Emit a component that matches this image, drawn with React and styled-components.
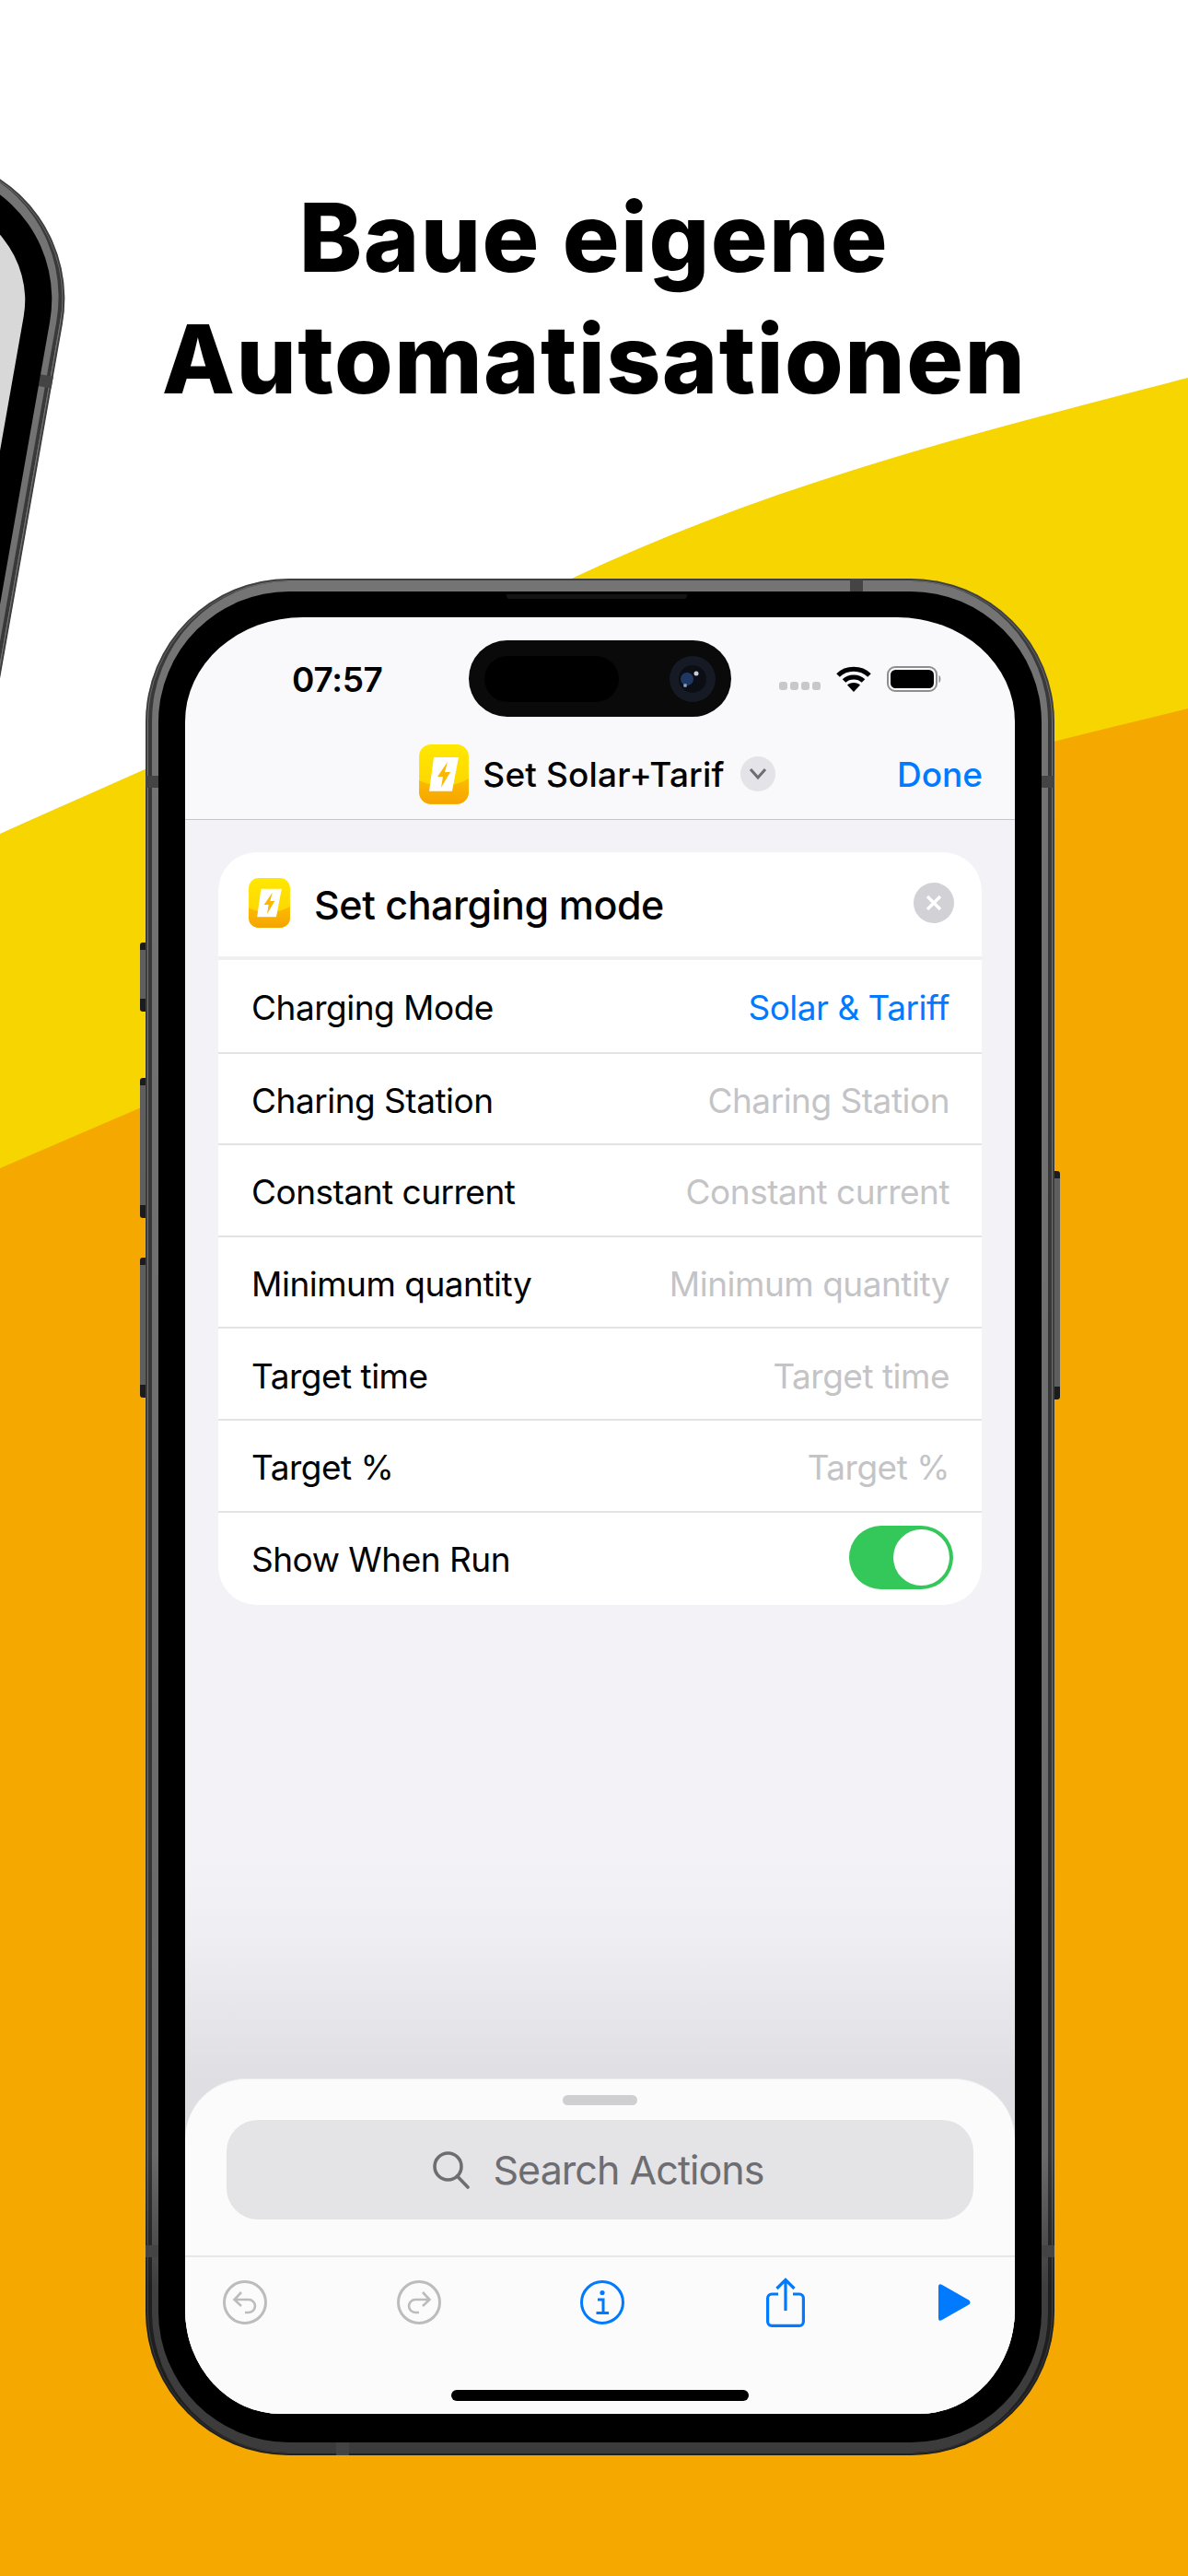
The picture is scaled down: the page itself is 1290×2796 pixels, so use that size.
import styled, { createGlobalStyle } from "styled-components";

const GlobalStyle = createGlobalStyle`
  html, body {
    margin: 0;
    padding: 0;
    background: white;
  }
  * {
    box-sizing: border-box;
  }
`;

const uiFont = `Inter, "Liberation Sans", sans-serif`;
const blue = "#007aff";

const Page = styled.div`
  position: relative;
  width: 1290px;
  height: 2796px;
  overflow: hidden;
  background: white;
  font-family: ${uiFont};
`;

const Backdrop = styled.svg`
  position: absolute;
  top: 0;
  left: 0;
`;

const Headline = styled.h1`
  position: relative;
  margin: 0;
  padding-top: 192px;
  font-family: ${uiFont};
  font-size: 103px;
  font-weight: 800;
  line-height: 132px;
  letter-spacing: 1.4px;
  text-align: center;
  color: black;
`;

const Handset = styled.div`
  position: relative;
  width: 987px;
  height: 2037px;
  padding: 14px;
  border-radius: 156px;
  background: linear-gradient(#747474, #6a6a6a 84%, #3f3f3f 91%, #3b3b3b);
  box-shadow: inset 0 0 0 2px rgba(0, 0, 0, 0.45);

  &::before {
    content: "";
    position: absolute;
    top: 3px;
    right: 3px;
    bottom: 3px;
    left: 3px;
    border-left: 4px solid rgba(0, 0, 0, 0.5);
    border-right: 4px solid rgba(0, 0, 0, 0.5);
    border-radius: 152px;
  }
`;

const MainPhone = styled(Handset)`
  margin: 172px 0 0 158px;
`;

const SidePhone = styled(Handset)`
  position: absolute;
  top: 198px;
  left: -892px;
  transform: rotate(10deg);
  transform-origin: top right;
`;

const SideButton = styled.div`
  position: absolute;
  top: ${(p) => p.$top}px;
  ${(p) => (p.$right ? "right: -6px;" : "left: -6px;")}
  width: 6px;
  height: ${(p) => p.$height}px;
  background: linear-gradient(#1c1c1c 8px, #5e5e5e 8px, #5e5e5e calc(100% - 14px), #1c1c1c calc(100% - 14px));
  border-radius: ${(p) => (p.$right ? "0 3px 3px 0" : "3px 0 0 3px")};
`;

/* antenna cuts on the steel ring */
const RingCut = styled.div`
  position: absolute;
  background: #444;
  ${(p) =>
    p.$horizontal
      ? `left: ${p.$at}px; ${p.$bottom ? "bottom: 0;" : "top: 0;"} width: 14px; height: 14px;`
      : `top: ${p.$at}px; ${p.$right ? "right: 0;" : "left: 0;"} width: 14px; height: 13px;`}
`;

const Bezel = styled.div`
  position: relative;
  width: 100%;
  height: 100%;
  padding: 28px 29px 31px;
  border-radius: 142px;
  background: black;
`;

const Speaker = styled.div`
  position: absolute;
  top: 3px;
  left: 378px;
  width: 196px;
  height: 5px;
  border-radius: 0 0 4px 4px;
  background: #141414;
`;

const Screen = styled.div`
  position: relative;
  display: flex;
  flex-direction: column;
  width: 100%;
  height: 100%;
  overflow: hidden;
  border-radius: 128px 128px 104px 104px / 113px;
  background: ${(p) => p.$bg || "#f9f9fb"};
`;

const StatusBar = styled.div`
  display: flex;
  align-items: center;
  justify-content: space-between;
  height: 134px;
  padding: 0 79px 0 116px;
`;

const Time = styled.span`
  font-size: 37px;
  font-weight: 600;
  letter-spacing: -0.3px;
  color: black;
`;

const Island = styled.div`
  position: absolute;
  top: 25px;
  left: 308px;
  display: flex;
  align-items: center;
  justify-content: space-between;
  width: 285px;
  height: 83px;
  padding: 0 17px;
  border-radius: 42px;
  background: #0a0a0a;
`;

const IslandPill = styled.div`
  width: 146px;
  height: 50px;
  border-radius: 25px;
  background: black;
`;

const StatusIcons = styled.div`
  display: flex;
  align-items: center;
  gap: 17px;
`;

const Dots = styled.div`
  display: flex;
  gap: 3px;
  margin-top: 14px;
`;

const Dot = styled.span`
  width: 9px;
  height: 9px;
  border-radius: 3px;
  background: #c8c8ca;
`;

const NavBar = styled.div`
  display: grid;
  grid-template-columns: 1fr auto 1fr;
  align-items: center;
  height: 86px;
  padding: 0 35px 12px 29px;
  border-bottom: 1px solid #c6c6c8;
`;

const NavTitle = styled.div`
  display: flex;
  align-items: center;
  grid-column: 2;
`;

const NavTitleText = styled.span`
  margin: 0 17px 0 15px;
  font-size: 37px;
  font-weight: 500;
  letter-spacing: 0.15px;
  color: black;
`;

const ChevronBadge = styled.span`
  display: flex;
  align-items: center;
  justify-content: center;
  width: 38px;
  height: 38px;
  border-radius: 50%;
  background: #e3e3e8;
`;

const DoneButton = styled.span`
  justify-self: end;
  font-size: 37px;
  font-weight: 500;
  letter-spacing: 0;
  color: ${blue};
`;

const Content = styled.div`
  display: flex;
  flex: 1;
  flex-direction: column;
  background: linear-gradient(#f2f2f7 0, #f2f2f7 1130px, #eeeef2 1220px, #e6e6ea 1300px, #dfdfe3 1366px);
`;

const Card = styled.div`
  margin: 35px 36px 0;
  padding-bottom: 3px;
  overflow: hidden;
  border-radius: 42px;
  background: white;
`;

const CardHeader = styled.div`
  display: flex;
  align-items: center;
  height: 117px;
  padding: 0 30px 4px 33px;
  border-bottom: 4px solid #efeff1;
`;

const CardTitle = styled.span`
  flex: 1;
  margin: 5px 0 0 26px;
  font-size: 43px;
  font-weight: 500;
  letter-spacing: -0.45px;
  color: black;
`;

const CloseBadge = styled.span`
  display: flex;
  align-items: center;
  justify-content: center;
  width: 44px;
  height: 44px;
  border-radius: 50%;
  background: #d1d1d6;
`;

const Row = styled.div`
  display: flex;
  align-items: center;
  justify-content: space-between;
  height: 99.6px;
  padding: 4px 35px 0 36px;
  font-size: 37px;
  letter-spacing: -0.5px;
  & + & {
    border-top: 2px solid #e3e3e5;
  }
`;

const RowLabel = styled.span`
  color: black;
`;

const RowValue = styled.span`
  color: ${(p) => (p.$filled ? blue : "#c4c4c7")};
`;

const Toggle = styled.div`
  display: flex;
  justify-content: flex-end;
  align-items: center;
  width: 113px;
  height: 69px;
  margin: -4px -4px 0 0;
  padding: 0 4px;
  border-radius: 35px;
  background: #34c759;
`;

const ToggleKnob = styled.span`
  width: 61px;
  height: 61px;
  border-radius: 50%;
  background: white;
`;

const Sheet = styled.div`
  display: flex;
  flex-direction: column;
  margin-top: auto;
  height: 364px;
  border-radius: 66px 66px 0 0;
  border-top: 1px solid #ececee;
  background: #fbfbfb;
`;

const Handle = styled.div`
  width: 81px;
  height: 11px;
  margin: 17px auto 16px;
  border-radius: 6px;
  background: #cfcfd1;
`;

const SearchField = styled.div`
  display: flex;
  align-items: center;
  justify-content: center;
  gap: 24px;
  height: 108px;
  margin: 0 45px;
  padding-right: 4px;
  border-radius: 34px;
  background: #e4e4e6;
`;

const SearchText = styled.span`
  font-size: 43px;
  letter-spacing: -0.95px;
  color: #6d6d72;
`;

const Toolbar = styled.div`
  display: flex;
  align-items: center;
  height: 99px;
  margin-top: 39px;
  border-top: 2px solid #e8e8ea;
`;

const ToolButton = styled.span`
  display: flex;
  margin-left: ${(p) => p.$gap}px;
  color: ${(p) => (p.$muted ? "#bcbcbe" : blue)};
`;

const HomeBar = styled.div`
  width: 323px;
  height: 12px;
  margin: 47px auto 0;
  border-radius: 6px;
  background: black;
`;

const AppIcon = ({ size }) => (
  <svg width={size} height={size * 1.2} viewBox="0 0 54 65" style={{ flexShrink: 0 }}>
    <defs>
      <linearGradient id="appTop" x1="0" y1="0" x2="0" y2="1">
        <stop offset="0" stopColor="#ffe800" />
        <stop offset="1" stopColor="#fbcf00" />
      </linearGradient>
      <linearGradient id="appBottom" x1="0" y1="0" x2="0" y2="1">
        <stop offset="0" stopColor="#fcbc00" />
        <stop offset="1" stopColor="#f6a400" />
      </linearGradient>
    </defs>
    <rect width="54" height="65" rx="13" fill="url(#appTop)" />
    <path d="M0 39 C16 47 38 47 54 37 V52 A13 13 0 0 1 41 65 H13 A13 13 0 0 1 0 52Z" fill="url(#appBottom)" />
    <path d="M16 14 H43 L36 51 H11Z" fill="white" />
    <path d="M31 19 L20 35 H26 L24 47 L34 30 H28Z" fill="#fbb800" />
  </svg>
);

const WifiIcon = () => (
  <svg width="38" height="28" viewBox="0 0 38 28">
    <path d="M2 10 C11 1 27 1 36 10" fill="none" stroke="black" strokeWidth="5" />
    <path d="M8.5 16 C14 10.5 24 10.5 29.5 16" fill="none" stroke="black" strokeWidth="5" />
    <path d="M19 28 L12 20.5 C15 17 23 17 26 20.5Z" fill="black" />
  </svg>
);

const BatteryIcon = () => (
  <svg width="60" height="28" viewBox="0 0 60 28">
    <rect x="1" y="1" width="53" height="26" rx="8" fill="none" stroke="#8e8e90" strokeWidth="2" />
    <rect x="4" y="4" width="47" height="20" rx="5.5" fill="black" />
    <path d="M56.5 10 C59 11 59 17 56.5 18Z" fill="#8e8e90" />
  </svg>
);

const CameraLens = () => (
  <svg width="50" height="50" viewBox="0 0 50 50">
    <circle cx="25" cy="25" r="25" fill="#161a24" />
    <circle cx="25" cy="25" r="15" fill="#0c0e16" />
    <circle cx="19" cy="25" r="7" fill="#1f3763" />
    <circle cx="29" cy="19" r="2.5" fill="#c9ccd6" />
    <circle cx="17" cy="32" r="2" fill="#7f9cc4" />
  </svg>
);

const SearchIcon = () => (
  <svg width="42" height="42" viewBox="0 0 42 42" fill="none" stroke="#6d6d72" strokeWidth="3.6" strokeLinecap="round">
    <circle cx="17.5" cy="17.5" r="14.5" />
    <path d="M27.5 28 L39 40" />
  </svg>
);

const UndoIcon = () => (
  <svg width="48" height="48" viewBox="0 0 48 48" fill="none" stroke="currentColor" strokeWidth="3">
    <circle cx="24" cy="24" r="22.5" />
    <path d="M20 13 L12.5 21 L20 28 M12.5 21 H28 A7 7 0 0 1 28 35 H24" strokeWidth="2.6" />
  </svg>
);

const RedoIcon = () => (
  <svg width="48" height="48" viewBox="0 0 48 48" fill="none" stroke="currentColor" strokeWidth="3">
    <circle cx="24" cy="24" r="22.5" />
    <path d="M28 13 L35.5 21 L28 28 M35.5 21 H20 A7 7 0 0 0 20 35 H24" strokeWidth="2.6" />
  </svg>
);

const InfoIcon = () => (
  <svg width="48" height="48" viewBox="0 0 48 48" fill="none" stroke="currentColor" strokeWidth="3">
    <circle cx="24" cy="24" r="22.5" />
    <circle cx="24" cy="13.5" r="2.6" fill="currentColor" stroke="none" />
    <path d="M19 21 H25 V35 M17.5 35.5 H31" strokeWidth="3" />
  </svg>
);

const ShareIcon = () => (
  <svg width="42" height="54" viewBox="0 0 42 54" fill="none" stroke="currentColor" strokeWidth="3.2">
    <path d="M13 18 H6 A4.5 4.5 0 0 0 1.6 22.5 V48 A4.5 4.5 0 0 0 6 52.4 H36 A4.5 4.5 0 0 0 40.4 48 V22.5 A4.5 4.5 0 0 0 36 18 H29" />
    <path d="M21 36 V2.5 M11.5 12 L21 2.5 L30.5 12" />
  </svg>
);

const PlayIcon = () => (
  <svg width="35" height="40" viewBox="0 0 35 40" fill="currentColor">
    <path d="M0 3 C0 0 2 -0.5 4 1 L33 17.5 C35 19 35 21 33 22.5 L4 39 C2 40.5 0 40 0 37Z" />
  </svg>
);

const ChevronIcon = () => (
  <svg width="20" height="14" viewBox="0 0 20 14" fill="none" stroke="#6d6d72" strokeWidth="3">
    <path d="M2 2 L10 11 L18 2" />
  </svg>
);

const CloseIcon = () => (
  <svg width="20" height="20" viewBox="0 0 20 20" fill="none" stroke="white" strokeWidth="3.4">
    <path d="M3 3 L17 17 M17 3 L3 17" />
  </svg>
);

const fields = [
  { label: "Charging Mode", value: "Solar & Tariff", filled: true },
  { label: "Charing Station", value: "Charing Station" },
  { label: "Constant current", value: "Constant current" },
  { label: "Minimum quantity", value: "Minimum quantity" },
  { label: "Target time", value: "Target time" },
  { label: "Target %", value: "Target %" },
];

export default function App() {
  return (
    <Page>
      <GlobalStyle />
      <Backdrop width="1290" height="2796" viewBox="0 0 1290 2796">
        <path d="M0 905 C200 815 420 722 625 626 C850 520 1080 465 1290 410 V2796 H0Z" fill="#f6d500" />
        <path d="M0 1268 L158 1200 C500 1000 900 860 1148 804 C1195 792 1245 780 1290 769 V2796 H0Z" fill="#f5a800" />
      </Backdrop>

      <SidePhone>
        <RingCut $at={214} $right />
        <Bezel>
          <Screen $bg="#d8d8d8" />
        </Bezel>
      </SidePhone>

      <Headline>
        Baue eigene
        <br />
        Automatisationen
      </Headline>

      <MainPhone>
        <SideButton $top={395} $height={75} />
        <SideButton $top={542} $height={152} />
        <SideButton $top={737} $height={152} />
        <SideButton $right $top={643} $height={248} />
        <RingCut $at={214} />
        <RingCut $at={214} $right />
        <RingCut $at={1809} />
        <RingCut $at={1809} $right />
        <RingCut $horizontal $at={765} />
        <RingCut $horizontal $bottom $at={207} />
        <Bezel>
          <Speaker />
          <Screen>
            <StatusBar>
              <Time>07:57</Time>
              <Island>
                <IslandPill />
                <CameraLens />
              </Island>
              <StatusIcons>
                <Dots>
                  <Dot />
                  <Dot />
                  <Dot />
                  <Dot />
                </Dots>
                <WifiIcon />
                <BatteryIcon />
              </StatusIcons>
            </StatusBar>

            <NavBar>
              <NavTitle>
                <AppIcon size={54} />
                <NavTitleText>Set Solar+Tarif</NavTitleText>
                <ChevronBadge>
                  <ChevronIcon />
                </ChevronBadge>
              </NavTitle>
              <DoneButton>Done</DoneButton>
            </NavBar>

            <Content>
              <Card>
                <CardHeader>
                  <AppIcon size={45} />
                  <CardTitle>Set charging mode</CardTitle>
                  <CloseBadge>
                    <CloseIcon />
                  </CloseBadge>
                </CardHeader>
                {fields.map((field) => (
                  <Row key={field.label}>
                    <RowLabel>{field.label}</RowLabel>
                    <RowValue $filled={field.filled}>{field.value}</RowValue>
                  </Row>
                ))}
                <Row>
                  <RowLabel>Show When Run</RowLabel>
                  <Toggle>
                    <ToggleKnob />
                  </Toggle>
                </Row>
              </Card>

              <Sheet>
                <Handle />
                <SearchField>
                  <SearchIcon />
                  <SearchText>Search Actions</SearchText>
                </SearchField>
                <Toolbar>
                  <ToolButton $muted $gap={41}>
                    <UndoIcon />
                  </ToolButton>
                  <ToolButton $muted $gap={141}>
                    <RedoIcon />
                  </ToolButton>
                  <ToolButton $gap={151}>
                    <InfoIcon />
                  </ToolButton>
                  <ToolButton $gap={154}>
                    <ShareIcon />
                  </ToolButton>
                  <ToolButton $gap={145}>
                    <PlayIcon />
                  </ToolButton>
                </Toolbar>
                <HomeBar />
              </Sheet>
            </Content>
          </Screen>
        </Bezel>
      </MainPhone>
    </Page>
  );
}
